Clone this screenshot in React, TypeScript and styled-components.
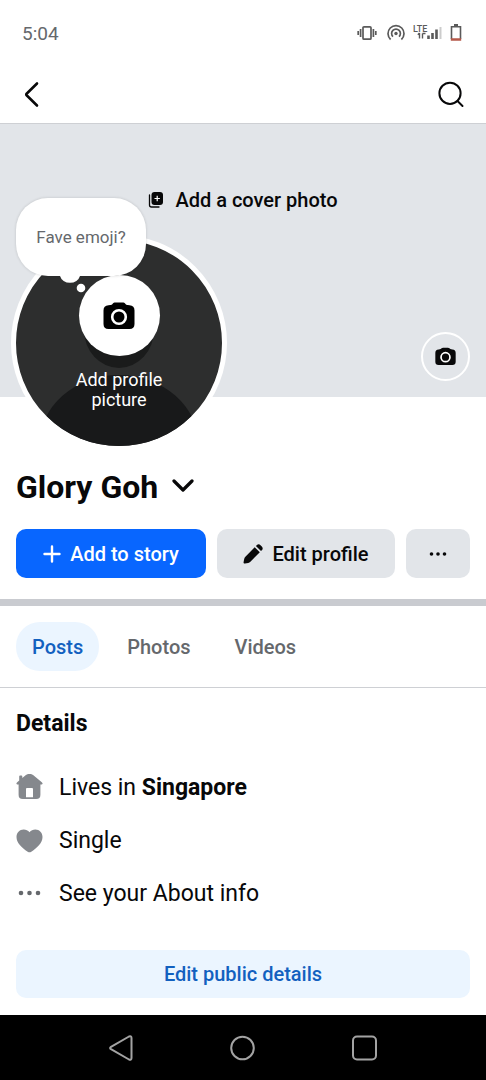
import React from "react";
import styled, { createGlobalStyle } from "styled-components";

const color = {
  ink: "#080809",
  muted: "#65686c",
  icon: "#85888d",
  wash: "#e2e5e9",
  line: "#ced0d4",
  blue: "#0866ff",
  blueText: "#1260bf",
  blueWash: "#ebf5ff",
};

const GlobalStyle = createGlobalStyle`
  *, *::before, *::after { box-sizing: border-box; }
  body {
    margin: 0;
    background: #fff;
    color: ${color.ink};
    font-family: Roboto, "Liberation Sans", sans-serif;
  }
  button {
    margin: 0;
    padding: 0;
    border: 0;
    background: none;
    color: inherit;
    font: inherit;
    cursor: pointer;
  }
  h1, h2, ul { margin: 0; padding: 0; }
  svg { display: block; flex: none; }
`;

const Page = styled.div`
  display: flex;
  flex-direction: column;
  min-height: 100vh;
`;

const StatusBar = styled.div`
  display: flex;
  align-items: center;
  justify-content: space-between;
  height: 66px;
  padding: 0 24px 0 22px;
  color: ${color.muted};
  font-size: 19px;
`;

const StatusIcons = styled.div`
  display: flex;
  align-items: center;
  gap: 7px;
`;

const Header = styled.header`
  display: flex;
  align-items: center;
  justify-content: space-between;
  height: 58px;
  padding: 0 20px;
  border-bottom: 1px solid ${color.line};
`;

const IconButton = styled.button`
  display: flex;
  align-items: center;
  justify-content: center;
`;

const Cover = styled.section`
  position: relative;
  display: flex;
  justify-content: center;
  align-items: flex-start;
  height: 273px;
  padding-top: 64px;
  background: ${color.wash};
`;

const CoverButton = styled.button`
  display: flex;
  align-items: center;
  gap: 11px;
  font-size: 20px;
  font-weight: 500;
  line-height: 24px;
`;

const CoverCamera = styled(IconButton)`
  position: absolute;
  right: 16px;
  bottom: 16px;
  width: 49px;
  height: 49px;
  border: 2px solid #fff;
  border-radius: 50%;
`;

const Avatar = styled.div`
  position: relative;
  width: 216px;
  height: 216px;
  margin: -162px 0 0 11px;
  border: 5px solid #fff;
  border-radius: 50%;
  background: #2d2e2e;
`;

const Silhouette = styled.svg`
  position: absolute;
  inset: 0;
`;

const AvatarButton = styled.button`
  position: relative;
  display: flex;
  flex-direction: column;
  align-items: center;
  gap: 14px;
  width: 100%;
  padding-top: 35px;
  color: #fff;
  font-size: 18px;
  line-height: 20px;
`;

const AvatarCaption = styled.span`
  width: 100px;
`;

const CameraDisc = styled.span`
  display: flex;
  align-items: center;
  justify-content: center;
  width: 81px;
  height: 81px;
  border-radius: 50%;
  background: #fff;
  color: #000;
`;

const Bubble = styled.button`
  position: absolute;
  top: -42px;
  left: 0;
  width: 130px;
  height: 78px;
  border-radius: 32px;
  background: #fff;
  box-shadow: 0 0 3px rgba(0, 0, 0, 0.16);
  color: ${color.muted};
  font-size: 17px;
  white-space: nowrap;
`;

const BubbleTail = styled.svg`
  position: absolute;
  top: 78px;
  left: 44px;
`;

const Identity = styled.section`
  display: flex;
  flex-direction: column;
  gap: 22px;
  padding: 16px 16px 21px;
  border-bottom: 7px solid #c9cbd0;
`;

const NameButton = styled.button`
  display: flex;
  align-items: center;
  gap: 14px;
  font-size: 32px;
  font-weight: 700;
  line-height: 40px;
`;

const Actions = styled.div`
  display: flex;
  gap: 11px;
`;

const Action = styled.button<{ $grow: number; $primary?: boolean }>`
  display: flex;
  flex: ${(p) => p.$grow} 1 0;
  align-items: center;
  justify-content: center;
  gap: 9px;
  height: 49px;
  border-radius: 10px;
  background: ${(p) => (p.$primary ? color.blue : color.wash)};
  color: ${(p) => (p.$primary ? "#fff" : color.ink)};
  font-size: 20px;
  font-weight: 500;
`;

const Tabs = styled.nav`
  display: flex;
  gap: 12px;
  padding: 16px;
  border-bottom: 1px solid ${color.line};
`;

const Tab = styled.button<{ $active?: boolean }>`
  height: 49px;
  padding: 0 16px;
  border-radius: 24px;
  background: ${(p) => (p.$active ? color.blueWash : "transparent")};
  color: ${(p) => (p.$active ? color.blueText : color.muted)};
  font-size: 20px;
  font-weight: 500;
`;

const Details = styled.section`
  padding: 20px 16px 17px;
`;

const DetailsTitle = styled.h2`
  font-size: 23px;
  font-weight: 700;
  line-height: 32px;
`;

const DetailList = styled.ul`
  display: flex;
  flex-direction: column;
  padding: 21px 0 30px;
  list-style: none;
`;

const Detail = styled.li`
  display: flex;
  align-items: center;
  gap: 16px;
  height: 53px;
  font-size: 23px;

  a {
    color: inherit;
    text-decoration: none;
  }
`;

const EditDetails = styled.button`
  width: 100%;
  height: 48px;
  border-radius: 10px;
  background: ${color.blueWash};
  color: ${color.blueText};
  font-size: 20px;
  font-weight: 500;
`;

const SystemNav = styled.nav`
  display: flex;
  align-items: center;
  justify-content: center;
  gap: 92px;
  height: 65px;
  margin-top: auto;
  background: #000;
  color: #a3a3a3;
`;

const CameraIcon = ({ size }: { size: number }) => (
  <svg width={size} height={size} viewBox="0 0 32 32" aria-hidden="true">
    <path
      fill="currentColor"
      d="M12.500 2.500h7c1.300 0 2.200.4 3 1.400.6.800 1.200 1.100 2.200 1.200l1.800.1c3.400.2 5 2 5 5.300v13.500c0 3.400-1.700 5-5 5h-21c-3.300 0-5-1.600-5-5V10.500c0-3.300 1.600-5.100 5-5.300l1.800-.1c1-.1 1.600-.4 2.200-1.200.8-1 1.700-1.400 3-1.400z"
    />
    <circle cx="16" cy="17" r="6.800" fill="none" stroke="#fff" strokeWidth="2.600" />
  </svg>
);

const Dots = ({ width, r, step }: { width: number; r: number; step: number }) => (
  <svg width={width} height="8" viewBox={`${-width / 2} -4 ${width} 8`} fill="currentColor" aria-hidden="true">
    <circle cx={-step} r={r} />
    <circle r={r} />
    <circle cx={step} r={r} />
  </svg>
);

export default function App() {
  return (
    <Page>
      <GlobalStyle />
      <StatusBar>
        <span>5:04</span>
        <StatusIcons>
          <svg width="22" height="18" viewBox="0 0 22 18" fill="none" stroke="#5a5a5a" strokeWidth="1.700">
            <rect x="6" y="2.800" width="8" height="12.400" rx="1" />
            <path d="M3.600 5v8M16.400 5v8M1.200 7v4M18.800 7v4" />
          </svg>
          <svg width="20" height="18" viewBox="2 0 20 18" fill="none" stroke="#5a5a5a" strokeWidth="1.700">
            <path d="M6.600 15.500a8 8 0 1 1 10.800 0M9 12.700a4.400 4.400 0 1 1 6 0" />
            <circle cx="12" cy="9.500" r="1.700" fill="#5a5a5a" stroke="none" />
          </svg>
          <svg width="30" height="18" viewBox="0 0 30 18" fill="none" stroke="#5a5a5a">
            <text x="0" y="8" fill="#5a5a5a" stroke="none" fontSize="9" fontWeight="500">
              LTE
            </text>
            <path d="M6.500 14.500V9M4.800 10.700 6.500 9M9.500 9.500v5M9.500 9.500h3" strokeWidth="1.400" />
            <path d="M15.500 15v-3.500M19.500 15V9M23.500 15V5.500" strokeWidth="2.600" />
            <path d="M27.500 15V3" stroke="#ccc" strokeWidth="2" />
          </svg>
          <svg width="12" height="20" viewBox="0 0 12 20" fill="none">
            <path d="M4 2h4" stroke="#5a5a5a" strokeWidth="2" />
            <path d="M1.500 16V3.800h9V16" stroke="#5a5a5a" strokeWidth="1.600" />
            <path d="M.8 16.500h10.400" stroke="#b5594a" strokeWidth="2.500" />
          </svg>
        </StatusIcons>
      </StatusBar>

      <Header>
        <IconButton aria-label="Back">
          <svg width="24" height="28" viewBox="0 0 24 28" fill="none" stroke="currentColor" strokeWidth="2.600" strokeLinecap="round" strokeLinejoin="round">
            <path d="M17 2.500 6.600 12.700a1.100 1.100 0 0 0 0 1.600L17 24.500" />
          </svg>
        </IconButton>
        <IconButton aria-label="Search">
          <svg width="28" height="28" viewBox="0 0 28 28" fill="none" stroke="currentColor" strokeWidth="2" strokeLinecap="round">
            <circle cx="12" cy="12.300" r="10.600" />
            <path d="m19.500 20 5 5" />
          </svg>
        </IconButton>
      </Header>

      <main>
        <Cover>
          <CoverButton>
            <svg width="16" height="18" viewBox="0 0 16 18" aria-hidden="true">
              <rect x="3.500" y="1" width="11.500" height="13" rx="3" fill="currentColor" />
              <path d="M1.500 4v10c0 1.400.6 2 2 2H11" fill="none" stroke="currentColor" strokeWidth="1.300" strokeLinecap="round" />
              <path d="M9.200 4.800v5.400M6.500 7.500h5.400" stroke="#fff" strokeWidth="1.200" />
            </svg>
            Add a cover photo
          </CoverButton>
          <CoverCamera aria-label="Change cover photo">
            <CameraIcon size={21} />
          </CoverCamera>
        </Cover>

        <Avatar>
          <Silhouette width="206" height="206" viewBox="0 0 206 206" aria-hidden="true">
            <clipPath id="disc">
              <circle cx="103" cy="103" r="103" />
            </clipPath>
            <g clipPath="url(#disc)">
              <ellipse cx="103" cy="90" rx="35" ry="38" fill="#1a1b1b" />
              <ellipse cx="103" cy="206" rx="80" ry="71" fill="#18191a" />
            </g>
          </Silhouette>
          <AvatarButton>
            <CameraDisc>
              <CameraIcon size={32} />
            </CameraDisc>
            <AvatarCaption>Add profile picture</AvatarCaption>
          </AvatarButton>
          <Bubble>
            Fave emoji?
            <BubbleTail width="28" height="18" viewBox="0 0 28 18" fill="#fff" aria-hidden="true">
              <path d="M0 0h20a10.300 9 0 0 1-20 0z" />
              <circle cx="21" cy="12" r="4.300" />
            </BubbleTail>
          </Bubble>
        </Avatar>

        <Identity>
          <h1>
            <NameButton>
              Glory Goh
              <svg width="22" height="16" viewBox="0 0 22 16" fill="none" stroke="currentColor" strokeWidth="3.200" strokeLinecap="round" strokeLinejoin="round" aria-hidden="true">
                <path d="m2 2 9 9 9-9" />
              </svg>
            </NameButton>
          </h1>
          <Actions>
            <Action $grow={190} $primary>
              <svg width="18" height="18" viewBox="0 0 18 18" stroke="currentColor" strokeWidth="2.400" strokeLinecap="round" aria-hidden="true">
                <path d="M9 1.500v15M1.500 9h15" />
              </svg>
              Add to story
            </Action>
            <Action $grow={178}>
              <svg width="20" height="20" viewBox="0 0 20 20" fill="currentColor" aria-hidden="true">
                <path d="M11.700 3.200 16.800 8.300 7.400 17.700c-.7.700-1.300 1-2.200 1.200l-3.200.6c-1 .2-1.600-.4-1.400-1.400l.6-3.200c.2-.9.500-1.500 1.200-2.200zM12.900 2l.8-.8c1.200-1.200 2.600-1.200 3.800 0l1.300 1.300c1.200 1.200 1.200 2.600 0 3.800l-.8.8z" />
              </svg>
              Edit profile
            </Action>
            <Action $grow={64} aria-label="More options">
              <Dots width={20} r={1.800} step={6.500} />
            </Action>
          </Actions>
        </Identity>

        <Tabs>
          <Tab $active>Posts</Tab>
          <Tab>Photos</Tab>
          <Tab>Videos</Tab>
        </Tabs>

        <Details>
          <DetailsTitle>Details</DetailsTitle>
          <DetailList>
            <Detail>
              <svg width="27" height="28" viewBox="0 0 27 28" fill={color.icon} aria-hidden="true">
                <path
                  fillRule="evenodd"
                  d="M3.200 2.500c0-.6.300-.9.900-.9h1.300c.6 0 .9.300.9.900v1.600L9.900 1c2.400-1.600 4.800-1.600 7.200 0l8.700 7.200c1.400 1.200.8 2.400-.8 2.400h-.6v10.200c0 3-1.300 4.200-4.200 4.200H6.800c-2.900 0-4.200-1.200-4.200-4.200V10.600H2c-1.600 0-2.200-1.200-.8-2.400l2-1.700zM11.300 14c-.9 0-1.300.5-1.300 1.300v7.900h7v-7.900c0-.8-.4-1.300-1.300-1.300z"
                />
              </svg>
              <span>
                Lives in <b>Singapore</b>
              </span>
            </Detail>
            <Detail>
              <svg width="27" height="24" viewBox="0 0 27 24" fill={color.icon} aria-hidden="true">
                <path d="M13.500 3.300C15 1.500 17 .5 19.300.5c4.200 0 7.200 3.200 7.200 7.500 0 6-5.200 10.700-11.200 14.700-1.300.8-2.300.8-3.600 0C5.700 18.700.5 14 .5 8 .5 3.700 3.500.5 7.700.5c2.300 0 4.300 1 5.800 2.800z" />
              </svg>
              Single
            </Detail>
            <Detail>
              <svg width="27" height="8" viewBox="0 0 27 8" fill={color.muted} aria-hidden="true">
                <circle cx="5" cy="3" r="2.300" />
                <circle cx="13.500" cy="3" r="2.300" />
                <circle cx="22" cy="3" r="2.300" />
              </svg>
              <a href="#about">See your About info</a>
            </Detail>
          </DetailList>
          <EditDetails>Edit public details</EditDetails>
        </Details>
      </main>

      <SystemNav aria-label="System">
        <IconButton aria-label="System back">
          <svg width="28" height="30" viewBox="0 0 28 30" fill="none" stroke="currentColor" strokeWidth="2" strokeLinejoin="round">
            <path d="M22 3.500c1.400-.7 2.500-.2 2.500 1.500v20c0 1.700-1.100 2.200-2.500 1.500L4 16.200c-1.200-.7-1.200-1.700 0-2.400z" />
          </svg>
        </IconButton>
        <IconButton aria-label="Home">
          <svg width="30" height="30" viewBox="0 0 30 30" fill="none" stroke="currentColor" strokeWidth="2">
            <circle cx="15.500" cy="15" r="11.300" />
          </svg>
        </IconButton>
        <IconButton aria-label="Recent apps">
          <svg width="30" height="30" viewBox="0 0 30 30" fill="none" stroke="currentColor" strokeWidth="2">
            <rect x="4" y="3.500" width="23" height="23" rx="4" />
          </svg>
        </IconButton>
      </SystemNav>
    </Page>
  );
}
